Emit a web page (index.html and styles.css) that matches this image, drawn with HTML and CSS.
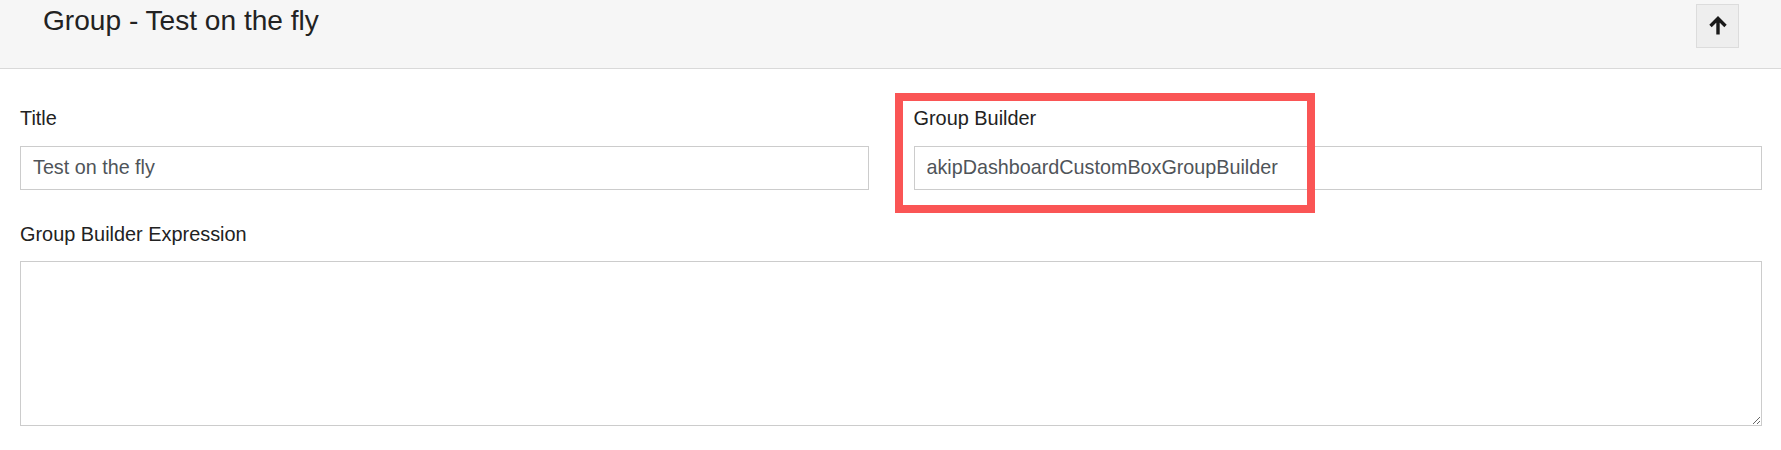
FILE: index.html
```html
<!DOCTYPE html>
<html>
<head>
<meta charset="utf-8">
<link rel="stylesheet" href="styles.css">
</head>
<body>
<div class="header">
  <h3 class="header-title">Group - Test on the fly</h3>
  <button class="up-btn" type="button" aria-label="Up">
    <svg width="18" height="20" viewBox="0 0 18 20">
      <path d="M9 18.5 V2.5 M1.5 10 L9 2.5 L16.5 10" fill="none" stroke="#1a1a1a" stroke-width="3.4" stroke-linecap="butt" stroke-linejoin="miter"/>
    </svg>
  </button>
</div>
<div class="form">
  <div class="row">
    <div class="col">
      <label class="lbl">Title</label>
      <input class="field" type="text" value="Test on the fly">
    </div>
    <div class="col col-marked">
      <label class="lbl">Group Builder</label>
      <input class="field" type="text" value="akipDashboardCustomBoxGroupBuilder">
      <div class="highlight"></div>
    </div>
  </div>
  <div class="group">
    <label class="lbl">Group Builder Expression</label>
    <textarea class="area"></textarea>
  </div>
</div>
</body>
</html>
```

FILE: styles.css
```css
html, body {
  margin: 0;
  padding: 0;
  background: #ffffff;
}
body {
  font-family: "Liberation Sans", Arial, sans-serif;
  color: #222222;
}
.header {
  display: flex;
  justify-content: space-between;
  align-items: flex-start;
  height: 64px;
  padding: 4px 42px 0 43px;
  box-sizing: content-box;
  background: #f6f6f6;
  border-bottom: 1px solid #d9d9d9;
}
.header-title {
  margin: 0;
  padding-top: 1px;
  font-size: 28.1px;
  font-weight: normal;
  line-height: 32px;
  color: #222222;
}
.up-btn {
  width: 43px;
  height: 44px;
  padding: 0;
  margin: 0;
  background: #eeeeee;
  border: 1px solid #dcdcdc;
  border-radius: 0;
  display: flex;
  align-items: center;
  justify-content: center;
}
.up-btn svg {
  display: block;
  margin-top: -1px;
}
.form {
  padding: 37px 19px 0 20px;
}
.row {
  display: flex;
  gap: 45px;
  margin-bottom: 32px;
}
.col {
  flex: 1 1 0;
  display: flex;
  flex-direction: column;
}
.col-marked {
  position: relative;
}
.lbl {
  display: block;
  font-size: 19.9px;
  line-height: 24px;
  margin-bottom: 15.5px;
  color: #222222;
}
.field {
  display: block;
  width: 100%;
  height: 44px;
  box-sizing: border-box;
  margin: 0;
  padding: 0 12px;
  border: 1px solid #cccccc;
  border-radius: 0;
  font-family: "Liberation Sans", Arial, sans-serif;
  font-size: 19.75px;
  color: #4f5459;
  background: #ffffff;
  outline: none;
}
.highlight {
  position: absolute;
  left: -19px;
  top: -13px;
  width: 420px;
  height: 120px;
  box-sizing: border-box;
  border: 8px solid #fa5555;
  pointer-events: none;
}
.group {
  display: flex;
  flex-direction: column;
}
.area {
  display: block;
  width: 100%;
  height: 165px;
  box-sizing: border-box;
  margin: 0;
  padding: 8px 12px;
  border: 1px solid #cccccc;
  border-radius: 0;
  font-family: "Liberation Sans", Arial, sans-serif;
  font-size: 19.75px;
  background: #ffffff;
}
```
